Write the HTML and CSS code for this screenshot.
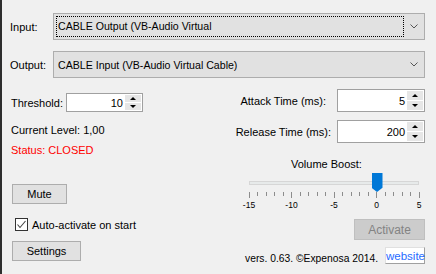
FILE: index.html
```html
<!DOCTYPE html>
<html lang="en">
<head>
  <meta charset="UTF-8" />
  <title>Silence Gate</title>
  <link rel="stylesheet" href="styles.css">
</head>
<body>
  <div class="app">
    <div class="combo-row">
      <span class="combo-label">Input:</span>
      <div class="combo">
        <span class="combo-focus">CABLE Output (VB-Audio Virtual</span>
        <svg class="chevron" width="8" height="5" viewBox="0 0 8 5"><path d="M0.5 0.5 L4 4 L7.5 0.5" fill="none" stroke="#555" stroke-width="1"/></svg>
      </div>
    </div>
    <div class="combo-row second">
      <span class="combo-label">Output:</span>
      <div class="combo">
        <span class="combo-text">CABLE Input (VB-Audio Virtual Cable)</span>
        <svg class="chevron" width="8" height="5" viewBox="0 0 8 5"><path d="M0.5 0.5 L4 4 L7.5 0.5" fill="none" stroke="#555" stroke-width="1"/></svg>
      </div>
    </div>

    <div class="main">
      <div class="left-col">
        <div class="field-row">
          <span class="thresh-label">Threshold:</span>
          <div class="spin small">
            <span class="spin-value">10</span>
            <div class="spin-btns">
              <span class="spin-btn"><i class="arrow-up"></i></span>
              <span class="spin-btn"><i class="arrow-down"></i></span>
            </div>
          </div>
        </div>
        <div class="level">Current Level: 1,00</div>
        <div class="status">Status: CLOSED</div>
        <button class="btn mute">Mute</button>
        <label class="check-row">
          <span class="check-box">
            <svg width="11" height="11" viewBox="0 0 11 11"><path d="M1.5 5.5 L4 8.5 L9.5 2" fill="none" stroke="#444" stroke-width="1.1"/></svg>
          </span>
          Auto-activate on start
        </label>
        <button class="btn settings">Settings</button>
      </div>

      <div class="right-col">
        <div class="field-row right">
          <span class="attack-label">Attack Time (ms):</span>
          <div class="spin">
            <span class="spin-value">5</span>
            <div class="spin-btns">
              <span class="spin-btn"><i class="arrow-up"></i></span>
              <span class="spin-btn"><i class="arrow-down"></i></span>
            </div>
          </div>
        </div>
        <div class="field-row right release">
          <span class="release-label">Release Time (ms):</span>
          <div class="spin">
            <span class="spin-value">200</span>
            <div class="spin-btns">
              <span class="spin-btn"><i class="arrow-up"></i></span>
              <span class="spin-btn"><i class="arrow-down"></i></span>
            </div>
          </div>
        </div>
        <div class="boost-label">Volume Boost:</div>
        <div class="slider">
          <div class="track"></div>
          <div class="thumb" style="left: 75%"></div>
          <div class="ticks"></div>
          <div class="scale">
            <span>-15</span><span>-10</span><span>-5</span><span>0</span><span>5</span>
          </div>
        </div>
        <button class="btn activate" disabled>Activate</button>
        <div class="footer">
          <span class="version">vers. 0.63. ©Expenosa 2014.</span>
          <button class="website">website</button>
        </div>
      </div>
    </div>
  </div>

  <script>
    const ticks = document.querySelector('.ticks');
    for (let i = 0; i <= 20; i++) {
      const t = document.createElement('span');
      t.className = i % 5 === 0 ? 'tick major' : 'tick';
      ticks.appendChild(t);
    }
  </script>
</body>
</html>
```

FILE: styles.css
```css
* {
  box-sizing: border-box;
}

body {
  margin: 0;
  width: 436px;
  height: 274px;
  background: #f0f0f0;
  border-left: 2px solid #2e2e2e;
  font-family: "Liberation Sans", Arial, sans-serif;
  font-size: 11px;
  color: #000;
  overflow: hidden;
  white-space: nowrap;
}

.app {
  padding: 13px 11px 0 8px;
}

.combo-row {
  display: flex;
  align-items: center;
  height: 27px;
}

.combo-row.second {
  margin-top: 11px;
}

.combo-label {
  width: 43px;
}

.combo {
  flex: 1;
  height: 27px;
  display: flex;
  align-items: center;
  background: #e1e1e1;
  border: 1px solid #adadad;
  padding: 0 6px 0 2px;
  font-size: 10.6px;
}

.combo-focus {
  flex: 1;
  height: 21px;
  line-height: 19px;
  border: 1px dotted #000;
  padding-left: 1px;
  margin-right: 6px;
}

.combo-text {
  flex: 1;
  padding-left: 2px;
}

.main {
  display: flex;
  justify-content: space-between;
  margin-top: 11px;
}

.left-col {
  display: flex;
  flex-direction: column;
  align-items: flex-start;
  padding-top: 4px;
}

.field-row {
  display: flex;
  align-items: center;
}

.thresh-label {
  width: 56px;
  padding-left: 1px;
}

.spin {
  display: flex;
  flex-shrink: 0;
  width: 88px;
  height: 23px;
  background: #fff;
  border: 1px solid #a0a0a0;
}

.spin.small {
  width: 77px;
  height: 19px;
}

.spin-value {
  flex: 1;
  text-align: right;
  padding-right: 2px;
  align-self: center;
}

.spin-btns {
  width: 16px;
  display: flex;
  flex-direction: column;
  margin: 1px 1px 1px 0;
  gap: 1px;
}

.spin-btn {
  flex: 1;
  background: #e6e6e6;
  display: flex;
  align-items: center;
  justify-content: center;
}

.arrow-up {
  width: 0;
  height: 0;
  border-left: 3.5px solid transparent;
  border-right: 3.5px solid transparent;
  border-bottom: 3px solid #000;
}

.arrow-down {
  width: 0;
  height: 0;
  border-left: 3.5px solid transparent;
  border-right: 3.5px solid transparent;
  border-top: 3px solid #000;
}

.level {
  margin-top: 11px;
  line-height: 14px;
  padding-left: 1px;
}

.status {
  margin-top: 6px;
  line-height: 14px;
  padding-left: 1px;
  color: #ff0000;
}

.btn {
  font-family: inherit;
  font-size: 11px;
  color: #000;
  background: #e1e1e1;
  border: 1px solid #adadad;
  padding: 0;
}

.mute {
  margin: 27px 0 0 2px;
  width: 55px;
  height: 20px;
}

.check-row {
  display: flex;
  align-items: center;
  margin: 14px 0 0 5px;
  height: 13px;
}

.check-box {
  width: 13px;
  height: 13px;
  background: #fff;
  border: 1px solid #333;
  margin-right: 4px;
  display: flex;
}

.settings {
  margin: 10px 0 0 2px;
  width: 69px;
  height: 20px;
}

.right-col {
  width: 184px;
  display: flex;
  flex-direction: column;
}

.field-row.right {
  justify-content: flex-end;
  height: 23px;
}

.field-row.release {
  margin-top: 8px;
}

.attack-label {
  margin-right: 11px;
}

.release-label {
  margin-right: 6px;
}

.boost-label {
  margin: 14px 0 0 50px;
  line-height: 14px;
}

.slider {
  position: relative;
  margin: 2px 6px 0 8px;
  height: 37px;
}

.track {
  height: 4px;
  margin-top: 8px;
  background: #e7eaea;
  border: 1px solid #d6d6d6;
}

.thumb {
  position: absolute;
  top: 0;
  width: 11px;
  height: 19px;
  margin-left: -5px;
  background: #0078d7;
  clip-path: polygon(0 0, 100% 0, 100% 78%, 50% 100%, 0 78%);
}

.ticks {
  display: flex;
  justify-content: space-between;
  margin: 7px -0.5px 0;
  height: 6px;
}

.tick {
  width: 1px;
  height: 4px;
  background: #8c8c8c;
}

.tick.major {
  height: 6px;
}

.scale {
  display: flex;
  justify-content: space-between;
  margin-top: 2px;
  font-size: 8.5px;
  line-height: 10px;
}

.scale span {
  width: 0;
  display: flex;
  justify-content: center;
}

.activate {
  align-self: flex-end;
  width: 71px;
  height: 21px;
  margin-top: 9px;
  font-size: 12px;
  background: #cccccc;
  border-color: #bfbfbf;
  color: #838383;
}

.footer {
  display: flex;
  justify-content: flex-end;
  align-items: center;
  margin-top: 7px;
}

.version {
  font-size: 10.3px;
  padding-top: 5px;
  margin-right: 7px;
}

.website {
  width: 40px;
  height: 17px;
  padding: 0;
  font-family: inherit;
  font-size: 11.5px;
  color: #1f6bff;
  background: #fff;
  border: 1px solid #e0e0e0;
  border-right-color: #a0a0a0;
  border-bottom-color: #a0a0a0;
}
```
